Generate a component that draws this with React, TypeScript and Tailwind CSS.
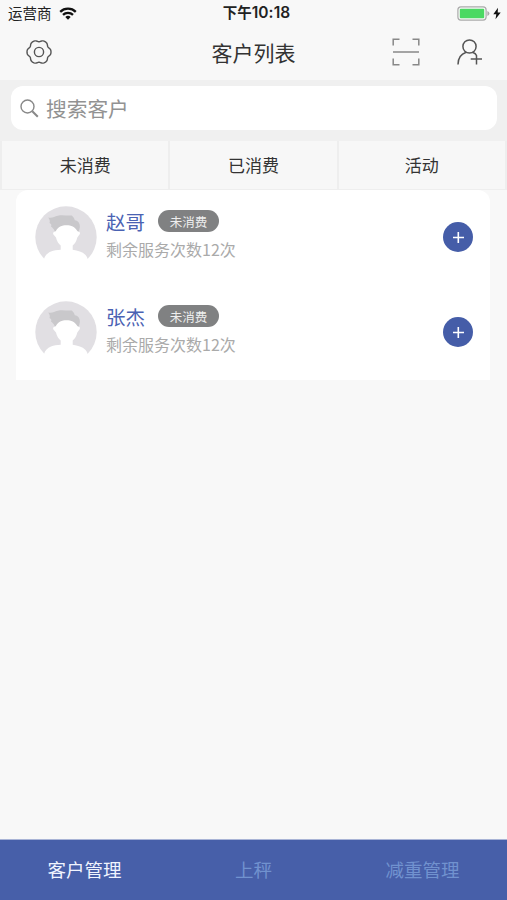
import { clsx } from 'clsx';

const customers = [
  { id: 1, name: '赵哥', status: '未消费', remaining: 12 },
  { id: 2, name: '张杰', status: '未消费', remaining: 12 },
];

const filters = ['未消费', '已消费', '活动'];
const sections = ['客户管理', '上秤', '减重管理'];

// Six-lobed cog outline, lobes on the horizontal axis and every 60deg
const cogPath =
  Array.from({ length: 72 }, (_, i) => {
    const a = (i * Math.PI) / 36;
    const r = 11.3 + 0.9 * Math.cos(6 * a) - 0.2 * Math.cos(12 * a);
    return `${i ? 'L' : 'M'}${(13 + r * Math.cos(a)).toFixed(2)} ${(13 + r * Math.sin(a)).toFixed(2)}`;
  }).join('') + 'Z';

const StatusBar = () => (
  <div className="h-7 grid grid-cols-3 items-center pl-2 text-[14.5px] leading-none text-[#222]">
    <div className="flex items-center gap-[7px] pb-0.5">
      <span>运营商</span>
      <svg width="18" height="13" viewBox="0 0 18 13" fill="none" stroke="#111" strokeWidth="2.3">
        <path d="M1.2 4.8a11.2 11.2 0 0 1 15.6 0" />
        <path d="M4 7.8a7.2 7.2 0 0 1 10 0" />
        <path d="M9 12.7 6.3 10a3.9 3.9 0 0 1 5.4 0z" fill="#111" stroke="none" />
      </svg>
    </div>
    <div className="-ml-0.5 pb-0.5 text-center font-semibold whitespace-nowrap">
      下午<span className="font-[Inter] text-[15.5px] tracking-[0.1px]">10:18</span>
    </div>
    <div className="flex items-center justify-end gap-[3px] pr-1.5 pb-0.5">
      <svg width="33" height="15" viewBox="0 0 33 15">
        <rect x="0.9" y="0.9" width="28.2" height="13.2" rx="3" fill="#f8f8f8" stroke="#aaa" strokeWidth="1.2" />
        <rect x="2.8" y="2.8" width="24.4" height="9.4" rx="1" fill="#4bd963" />
        <path d="M30.4 5q2 .6 2 2.5t-2 2.5z" fill="#aaa" />
      </svg>
      <svg width="8" height="13" viewBox="0 0 8 13">
        <path d="M5 .7.3 7.2h3L2.5 12.3 7.7 5.4h-3z" fill="#111" />
      </svg>
    </div>
  </div>
);

const Header = () => (
  <header className="h-[52px] grid grid-cols-3 items-center px-[26px] pb-1">
    <svg width="26" height="26" viewBox="0 0 26 26" fill="none" stroke="#555" strokeWidth="1.4" strokeLinejoin="round">
      <path d={cogPath} />
      <circle cx="13" cy="13" r="4.6" />
    </svg>
    <h1 className="text-center text-[21px] leading-none text-[#333] whitespace-nowrap">客户列表</h1>
    <div className="-mr-px flex items-center justify-end gap-[37px]">
      <svg width="28" height="28" viewBox="0 0 28 28" fill="none" stroke="#888" strokeWidth="1.5">
        <path d="M1.2 7.5V1.2h6.3M20.5 1.2h6.3v6.3M26.8 20.5v6.3h-6.3M7.5 26.8H1.2v-6.3M1 14h26" />
      </svg>
      <svg width="25" height="26" viewBox="0 0 25 26" fill="none" stroke="#555" strokeWidth="1.5">
        <circle cx="12.5" cy="7.5" r="6.6" />
        <path d="M1 25.500c0-6.500 3.300-10.700 8.200-12.300M15.500 13.200c2 .7 3.500 1.800 4 3.300v9M13.700 20H25" />
      </svg>
    </div>
  </header>
);

const Avatar = () => (
  <svg className="shrink-0" width="62" height="62" viewBox="0 0 62 62">
    <circle cx="31" cy="31" r="30.7" fill="#e1dfe3" />
    <path
      d="M13.300 11.500c4 .8 6-.8 9.500-1.700 4.500-1.300 9 .2 14-.3 1.800 1.500 2.500 3 3 4.700 3.500.3 5.500 3.500 5 7.300L43.500 27H20c0-3-2-5-4-6.500.8-1.500.3-2.500-1.500-3.500.6-1.500.5-3-1.200-5.500z"
      fill="#c9c8cb"
    />
    <path
      d="M19.300 25.800c1.200-.2 1.700-.8 2-1.500 1.700-3.300 5.500-5.100 10.200-5.100s8.600 1.800 10.300 5.100c.4.700 1 1.300 2.200 1.500 1 .4 1.300 1.600.5 2.700L42.300 31.500c-.8 3.700-2.400 6.200-4.600 8v4.300c5 .7 9.800 2 12.600 5 1.200 1.200 2 2.800 2.500 4.700V62H9v-9c1-3.500 3.500-6 7-7.500 2.800-1 6-1.500 9.700-1.700v-4.300c-2.200-1.800-3.900-4.300-4.700-8l-2.600-3c-.6-1.100-.2-2.300.9-2.700z"
      fill="#fff"
    />
  </svg>
);

const CustomerRow = ({ customer }: { customer: (typeof customers)[number] }) => (
  <li className="h-[95px] flex items-start pl-[19px] pr-[17px] pt-4">
    <Avatar />
    <div className="ml-[9px] flex-1">
      <div className="flex items-center h-[30px]">
        <span className="pt-0.5 text-[19.5px] leading-none text-[#4a62b3]">{customer.name}</span>
        <span className="ml-[13px] w-[61px] h-[22px] rounded-full bg-[#808182] text-[12.5px] leading-[23px] text-center text-[#eee]">
          {customer.status}
        </span>
      </div>
      <p className="mt-[5px] text-base leading-4 text-[#aaa]">剩余服务次数{customer.remaining}次</p>
    </div>
    <button className="mt-4 size-[30px] rounded-full bg-[#455da8] flex items-center justify-center">
      <svg width="12" height="12" viewBox="0 0 12 12" stroke="#fff" strokeWidth="1.6">
        <path d="M6.3 1v11M1 6.5h11" />
      </svg>
    </button>
  </li>
);

export default function App() {
  return (
    <div className="h-screen flex flex-col overflow-hidden bg-[#f8f8f8] font-['Noto_Sans_CJK_SC',sans-serif]">
      <StatusBar />
      <Header />
      <div className="h-[61px] shrink-0 bg-[#f0f0f0] pl-[11px] pr-2.5 pt-[6px]">
        <div className="h-11 rounded-xl bg-white flex items-center gap-2 pl-[9px]">
          <svg width="19" height="19" viewBox="0 0 19 19" fill="none" stroke="#888" strokeWidth="1.4">
            <circle cx="7.5" cy="7.5" r="6.5" />
            <path d="m12.3 12.3 5.500 5.500" strokeWidth="2" />
          </svg>
          <span className="-ml-px text-[20.7px] leading-none text-[#929292]">搜索客户</span>
        </div>
      </div>
      <nav className="h-[49px] shrink-0 grid grid-cols-3 gap-0.5 bg-[#eee] px-0.5 pb-px">
        {filters.map((label) => (
          <button key={label} className="bg-[#f7f7f7] pb-px text-[17px] leading-none text-[#333]">
            {label}
          </button>
        ))}
      </nav>
      <main className="flex-1">
        <ul className="ml-4 mr-[17px] rounded-t-xl bg-white">
          {customers.map((c) => (
            <CustomerRow key={c.id} customer={c} />
          ))}
        </ul>
      </main>
      <footer className="h-[61px] shrink-0 grid grid-cols-3 bg-[#475fa9] border-t border-[#a9b4d6]">
        {sections.map((label, i) => (
          <button
            key={label}
            className={clsx('pb-0.5 text-[18.5px] leading-none', i === 0 ? 'text-[#f0f4ff]' : 'text-[#7192cf]')}
          >
            {label}
          </button>
        ))}
      </footer>
    </div>
  );
}
